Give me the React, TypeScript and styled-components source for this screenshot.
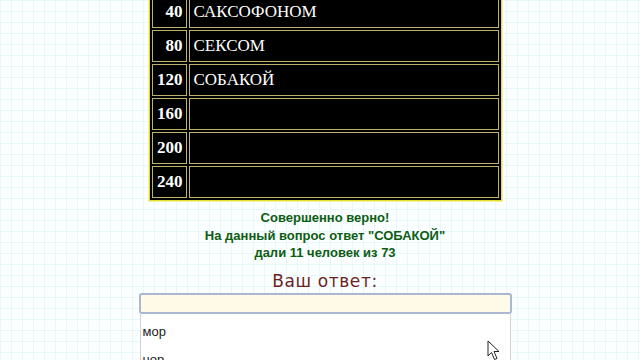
import React from 'react'
import styled, { createGlobalStyle } from 'styled-components'

const GlobalStyle = createGlobalStyle`
  html, body {
    margin: 0;
    padding: 0;
    height: 360px;
    overflow: hidden;
  }
  body {
    background-color: #fbffff;
    background-image:
      linear-gradient(#e8f7f8 1px, transparent 1px),
      linear-gradient(90deg, #e8f7f8 1px, transparent 1px);
    background-size: 11px 11px;
    font-family: 'Liberation Sans', Arial, sans-serif;
  }
`

const Page = styled.div`
  display: flex;
  flex-direction: column;
  align-items: center;
  padding-left: 10px;
`

const Board = styled.table`
  margin-top: -7px;
  width: 353px;
  background: #000;
  border: 1px solid #e4e030;
  box-shadow: 0 0 0 1px #f4f2a0;
  border-spacing: 2px;
  font-family: 'Liberation Serif', 'Times New Roman', serif;
  color: #fff;
`

const Cell = styled.td<{ $price?: boolean }>`
  height: 30px;
  padding: 0 ${(p) => (p.$price ? '3px' : '4px')};
  border: 1px solid #bdb46a;
  text-align: ${(p) => (p.$price ? 'right' : 'left')};
  width: ${(p) => (p.$price ? '27px' : 'auto')};
  font-size: 17px;
  font-weight: ${(p) => (p.$price ? 'bold' : 'normal')};
  vertical-align: middle;
  white-space: nowrap;
`

const Verdict = styled.div`
  margin-top: 8px;
  color: #0c5c14;
  font-size: 13px;
  font-weight: bold;
  line-height: 17.5px;
  text-align: center;
`

const Prompt = styled.div`
  margin-top: 9px;
  color: #6e1f1f;
  font-family: 'DejaVu Sans', Verdana, sans-serif;
  font-size: 17px;
  letter-spacing: 0.6px;
  line-height: 20px;
`

const Answer = styled.div`
  margin-top: 2px;
  width: 373px;
  position: relative;
`

const Field = styled.input`
  display: block;
  box-sizing: border-box;
  width: 100%;
  height: 21px;
  margin: 0;
  background: #fffbe8;
  border: 2px solid #a9b8cf;
  border-radius: 3px;
  outline: none;
`

const Suggestions = styled.ul`
  list-style: none;
  margin: 0 1px;
  padding: 4px 0 0;
  height: 80px;
  background: #fff;
  border-left: 1px solid #cfd3d8;
  border-right: 1px solid #cfd3d8;
`

const Suggestion = styled.li`
  padding: 6px 2px;
  font-size: 13px;
  line-height: 16px;
  color: #1c1c1c;
`

const Pointer = styled.svg`
  position: absolute;
  left: 348px;
  top: 47px;
`

const rows = [
  { price: 40, word: 'САКСОФОНОМ' },
  { price: 80, word: 'СЕКСОМ' },
  { price: 120, word: 'СОБАКОЙ' },
  { price: 160, word: '' },
  { price: 200, word: '' },
  { price: 240, word: '' },
]

export default function App() {
  return (
    <>
      <GlobalStyle />
      <Page>
        <Board>
          <tbody>
            {rows.map((r) => (
              <tr key={r.price}>
                <Cell $price>{r.price}</Cell>
                <Cell>{r.word}</Cell>
              </tr>
            ))}
          </tbody>
        </Board>
        <Verdict>
          Совершенно верно!
          <br />
          На данный вопрос ответ "СОБАКОЙ"
          <br />
          дали 11 человек из 73
        </Verdict>
        <Prompt>Ваш ответ:</Prompt>
        <Answer>
          <Field type="text" />
          <Suggestions>
            <Suggestion>мор</Suggestion>
            <Suggestion>нор</Suggestion>
          </Suggestions>
          <Pointer width="14" height="21" viewBox="0 0 14 21">
            <path
              d="M1 1 L1 16 L4.5 12.5 L7.5 19.5 L10 18.5 L7 11.5 L12 11.5 Z"
              fill="#fff"
              stroke="#222"
              strokeWidth="1"
              strokeLinejoin="round"
            />
          </Pointer>
        </Answer>
      </Page>
    </>
  )
}
